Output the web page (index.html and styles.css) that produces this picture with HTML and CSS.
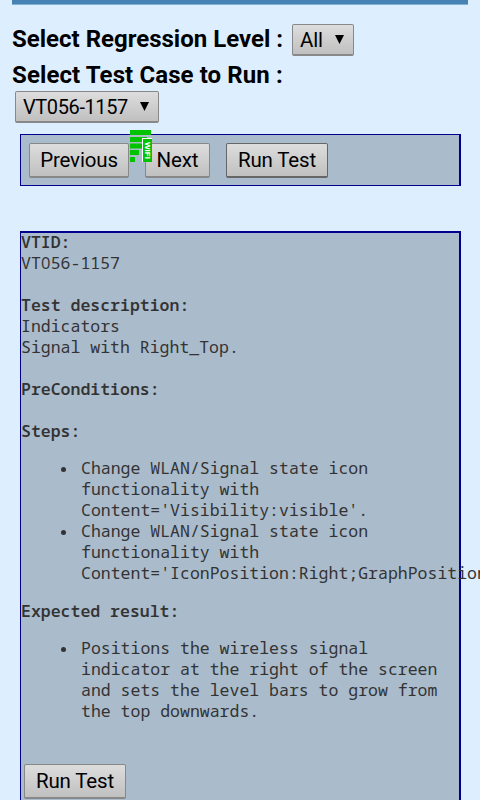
FILE: index.html
```html
<!DOCTYPE html>
<html lang="en">
<head>
<meta charset="utf-8">
<title>Regression tests</title>
<link rel="stylesheet" href="styles.css">
</head>
<body>
<div class="rule"></div>
<div class="row level"><span class="label">Select Regression Level :</span><button class="control select all">All<svg viewBox="0 0 10 10"><path d="M0 0H10L5 10Z"/></svg></button></div>
<div class="row"><span class="label case">Select Test Case to Run :</span></div>
<button class="control select test">VT056-1157<svg viewBox="0 0 10 10"><path d="M0 0H10L5 10Z"/></svg></button>
<div class="toolbar">
<button class="control previous">Previous</button><button class="control next">Next</button><button class="control run">Run Test</button>
<svg class="signal" viewBox="0 0 22 32"><g fill="#00c400"><path d="M0 0H21V5H0ZM0 7H17V12H0ZM0 13.5H12V18.5H0ZM0 20H9V25H0ZM0 27H5V32H0Z"/></g><path fill="#fff" d="M12 8H22V9H13V32H12Z"/><path fill="#00c400" d="M13 9H22V32H13Z"/></svg><span class="wifi">WIFI</span>
</div>
<main class="details">
<b>VTID:</b><br>VT<span class="zero">0</span>56-1157<br><br>
<b>Test description:</b><br>Indicators<br>Signal with Right_Top.<br><br>
<b>PreConditions:</b><br><br>
<b>Steps:</b>
<ul class="steps"><li>Change WLAN/Signal state icon functionality with Content='Visibility:visible'.</li><li>Change WLAN/Signal state icon functionality with Content='IconPosition:Right;GraphPosition</li></ul>
<b>Expected result:</b>
<ul><li>Positions the wireless signal indicator at the right of the screen and sets the level bars to grow from the top downwards.</li></ul>
<button class="control bottom">Run Test</button>
</main>
</body>
</html>
```
FILE: styles.css
```css
* { box-sizing: border-box; }
html { overflow: hidden; }
body { display: flex; flex-direction: column; margin: 0; width: 480px; height: 800px; overflow: hidden; background: #def; font-family: Roboto, sans-serif; }
.rule { flex: none; height: 5px; margin: 0 12px; background: #4682b4; border-bottom: 1px solid #82b0d5; }
.row { display: flex; flex: none; align-items: center; height: 36px; padding-left: 12px; }
.level { margin-top: 16px; }
.label { width: 280px; font-size: 24px; font-weight: 700; white-space: nowrap; }
.case { letter-spacing: .1px; }
.control { display: flex; flex: none; align-items: center; justify-content: center; height: 35px; padding: 0; border: 1px solid #888; border-bottom-width: 2px; border-radius: 2px; background: linear-gradient(#ddd, #c0c0c0); color: #000; font: 20.5px/30px Roboto, sans-serif; letter-spacing: -.15px; white-space: nowrap; }
.select { justify-content: space-between; height: 32px; padding: 0 9px 0 7px; }
.select svg { width: 9px; height: 9px; }
.all { position: relative; top: 1px; width: 62px; }
.test { width: 144px; margin: -2px 0 0 15px; font-size: 20px; letter-spacing: -.4px; }
.toolbar { position: relative; display: flex; flex: none; width: 441px; height: 52px; margin: 11px 0 0 20px; padding: 8px 0 0 8px; background: #abc; border: solid #000090; border-width: 1px 2px 1px 1px; }
.previous { width: 100px; }
.next { width: 65px; margin-left: 16px; }
.run { width: 102px; margin-left: 16px; border-color: #666; }
.signal { position: absolute; left: 109px; top: -5px; width: 22px; height: 32px; }
.wifi { position: absolute; left: 122px; top: 4px; width: 9px; height: 23px; color: #fff; font: bold 8px/9px "Liberation Sans", sans-serif; text-align: center; writing-mode: vertical-rl; }
.details { flex: 1; min-height: 0; width: 441px; margin: 45px 0 0 20px; background: #abc; border: solid #000090; border-width: 2px 2px 0 1px; color: #333; font: 16.5px/21px "Droid Sans Mono", "Noto Sans Mono", "DejaVu Sans Mono", monospace; }
.details::before { content: ""; display: block; margin-top: -2px; }
.details b { font-weight: 600; }
.zero { display: inline-block; width: 9.9px; line-height: 1; font-family: "Open Sans", sans-serif; text-align: center; }
ul { margin: 16px 0; padding: 0 0 0 60px; list-style: none; }
.steps { margin-bottom: 17px; }
li::before { content: ""; float: left; width: 5px; height: 5px; margin: 10px 0 0 -20px; border-radius: 50%; background: #333; }
.bottom { width: 102px; margin: 43px 0 0 3px; }
```
